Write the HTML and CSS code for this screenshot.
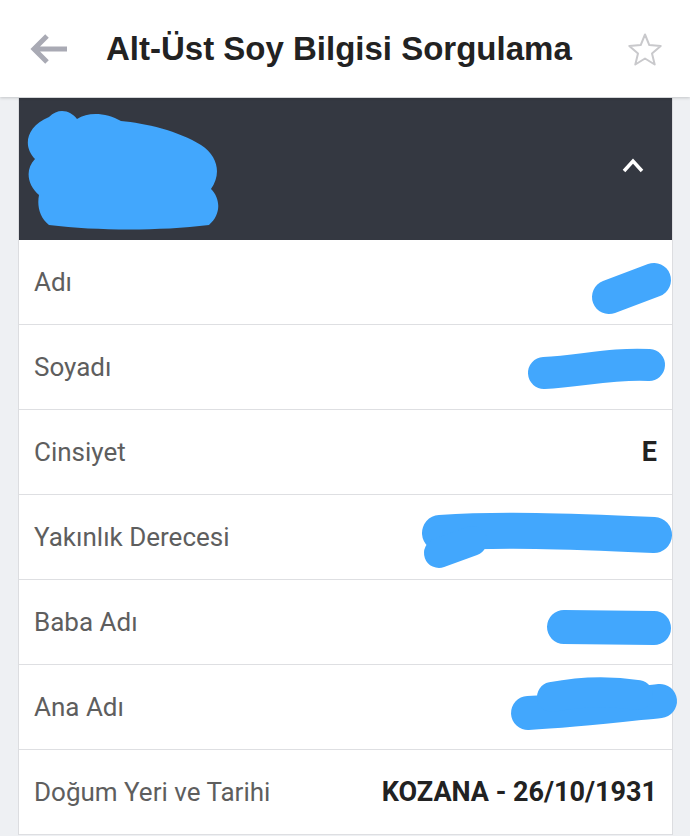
FILE: index.html
```html
<!DOCTYPE html>
<html lang="tr">
<head>
    <meta charset="UTF-8">
    <meta name="viewport" content="width=device-width, initial-scale=1.0">
    <title>Alt-Üst Soy Bilgisi Sorgulama</title>
    <link rel="stylesheet" href="styles.css">
</head>
<body>
    <header class="topbar">
        <svg class="back" width="40" height="32" viewBox="0 0 40 32">
            <path d="M38 16H6M18 3L5 16l13 13" fill="none" stroke="#a9aab4" stroke-width="5"/>
        </svg>
        <h1 class="title">Alt-Üst Soy Bilgisi Sorgulama</h1>
        <svg class="star" width="36" height="34" viewBox="0 0 36 34">
            <path d="M18 2.5l4.3 10.6 11.4.9-8.7 7.4 2.7 11.1L18 26.5l-9.7 6 2.7-11.1-8.7-7.4 11.4-.9z" fill="none" stroke="#c9c9cc" stroke-width="2" stroke-linejoin="round"/>
        </svg>
    </header>

    <main class="card">
        <div class="card-head">
            <svg class="mark" width="200" height="124" viewBox="0 0 200 124">
                <path d="M22 10c10-10 22-6 28 2 12-8 30-6 44 2 24 2 58 10 80 24 18 12 20 30 10 44 10 10 10 26-2 36-50 6-110 6-160 0-10-8-12-20-10-30-12-10-14-26-4-36-12-12-10-32 14-42z" fill="#42a7fd"/>
            </svg>
            <svg class="chevron" width="24" height="16" viewBox="0 0 24 16">
                <path d="M3 14l9-10 9 10" fill="none" stroke="#fff" stroke-width="3.5"/>
            </svg>
        </div>

        <div class="row">
            <span class="label">Adı</span>
            <svg class="mark-value" width="260" height="85" viewBox="0 0 260 85">
                <path d="M197 57L242 40" stroke="#42a7fd" stroke-width="34" stroke-linecap="round"/>
            </svg>
        </div>
        <div class="row">
            <span class="label">Soyadı</span>
            <svg class="mark-value" width="260" height="85" viewBox="0 0 260 85">
                <path d="M132 48C170 46 200 38 237 40" fill="none" stroke="#42a7fd" stroke-width="32" stroke-linecap="round"/>
            </svg>
        </div>
        <div class="row">
            <span class="label">Cinsiyet</span>
            <span class="value">E</span>
        </div>
        <div class="row">
            <span class="label">Yakınlık Derecesi</span>
            <svg class="mark-value" width="260" height="85" viewBox="0 0 260 85">
                <path d="M28 38C90 34 150 36 242 40" fill="none" stroke="#42a7fd" stroke-width="36" stroke-linecap="round"/>
                <path d="M27 58L60 46" stroke="#42a7fd" stroke-width="30" stroke-linecap="round"/>
            </svg>
        </div>
        <div class="row">
            <span class="label">Baba Adı</span>
            <svg class="mark-value" width="260" height="85" viewBox="0 0 260 85">
                <path d="M152 47L242 48" stroke="#42a7fd" stroke-width="34" stroke-linecap="round"/>
            </svg>
        </div>
        <div class="row">
            <span class="label">Ana Adı</span>
            <svg class="mark-value" width="260" height="85" viewBox="0 0 260 85">
                <path d="M116 48C160 46 210 40 248 36" fill="none" stroke="#42a7fd" stroke-width="34" stroke-linecap="round"/>
                <path d="M140 32C170 26 200 26 226 30" fill="none" stroke="#42a7fd" stroke-width="30" stroke-linecap="round"/>
            </svg>
        </div>
        <div class="row">
            <span class="label">Doğum Yeri ve Tarihi</span>
            <span class="value">KOZANA - 26/10/1931</span>
        </div>
    </main>
</body>
</html>
```

FILE: styles.css
```css
body {
    margin: 0;
    background-color: #eef0f3;
    font-family: Roboto, "Liberation Sans", sans-serif;
    overflow: hidden;
}

.topbar {
    display: flex;
    align-items: center;
    height: 97px;
    padding: 0 27px 0 29px;
    background: white;
    box-shadow: 0 1px 3px rgba(0, 0, 0, 0.18);
    position: relative;
    z-index: 1;
}

.back {
    flex: none;
}

.title {
    flex: 1;
    margin: 0 0 0 37px;
    font-family: "Liberation Sans", Arial, sans-serif;
    font-size: 33px;
    font-weight: bold;
    color: #222;
    white-space: nowrap;
}

.star {
    flex: none;
}

.card {
    margin: 1px 17px 0 18px;
    background: white;
    border-left: 1px solid #dcdde0;
    border-right: 1px solid #dcdde0;
}

.card-head {
    display: flex;
    align-items: center;
    justify-content: space-between;
    height: 142px;
    padding: 0 27px 0 8px;
    background-color: #343841;
}

.chevron {
    margin-bottom: 8px;
}

.row {
    display: flex;
    align-items: center;
    justify-content: space-between;
    height: 84px;
    padding: 0 15px 0 15px;
    border-bottom: 1px solid #dedfe2;
}

.label {
    font-size: 26px;
    color: #5e5e5e;
}

.value {
    font-size: 27px;
    font-weight: bold;
    color: #222;
}

.mark-value {
    margin-right: -15px;
    overflow: visible;
}
```
